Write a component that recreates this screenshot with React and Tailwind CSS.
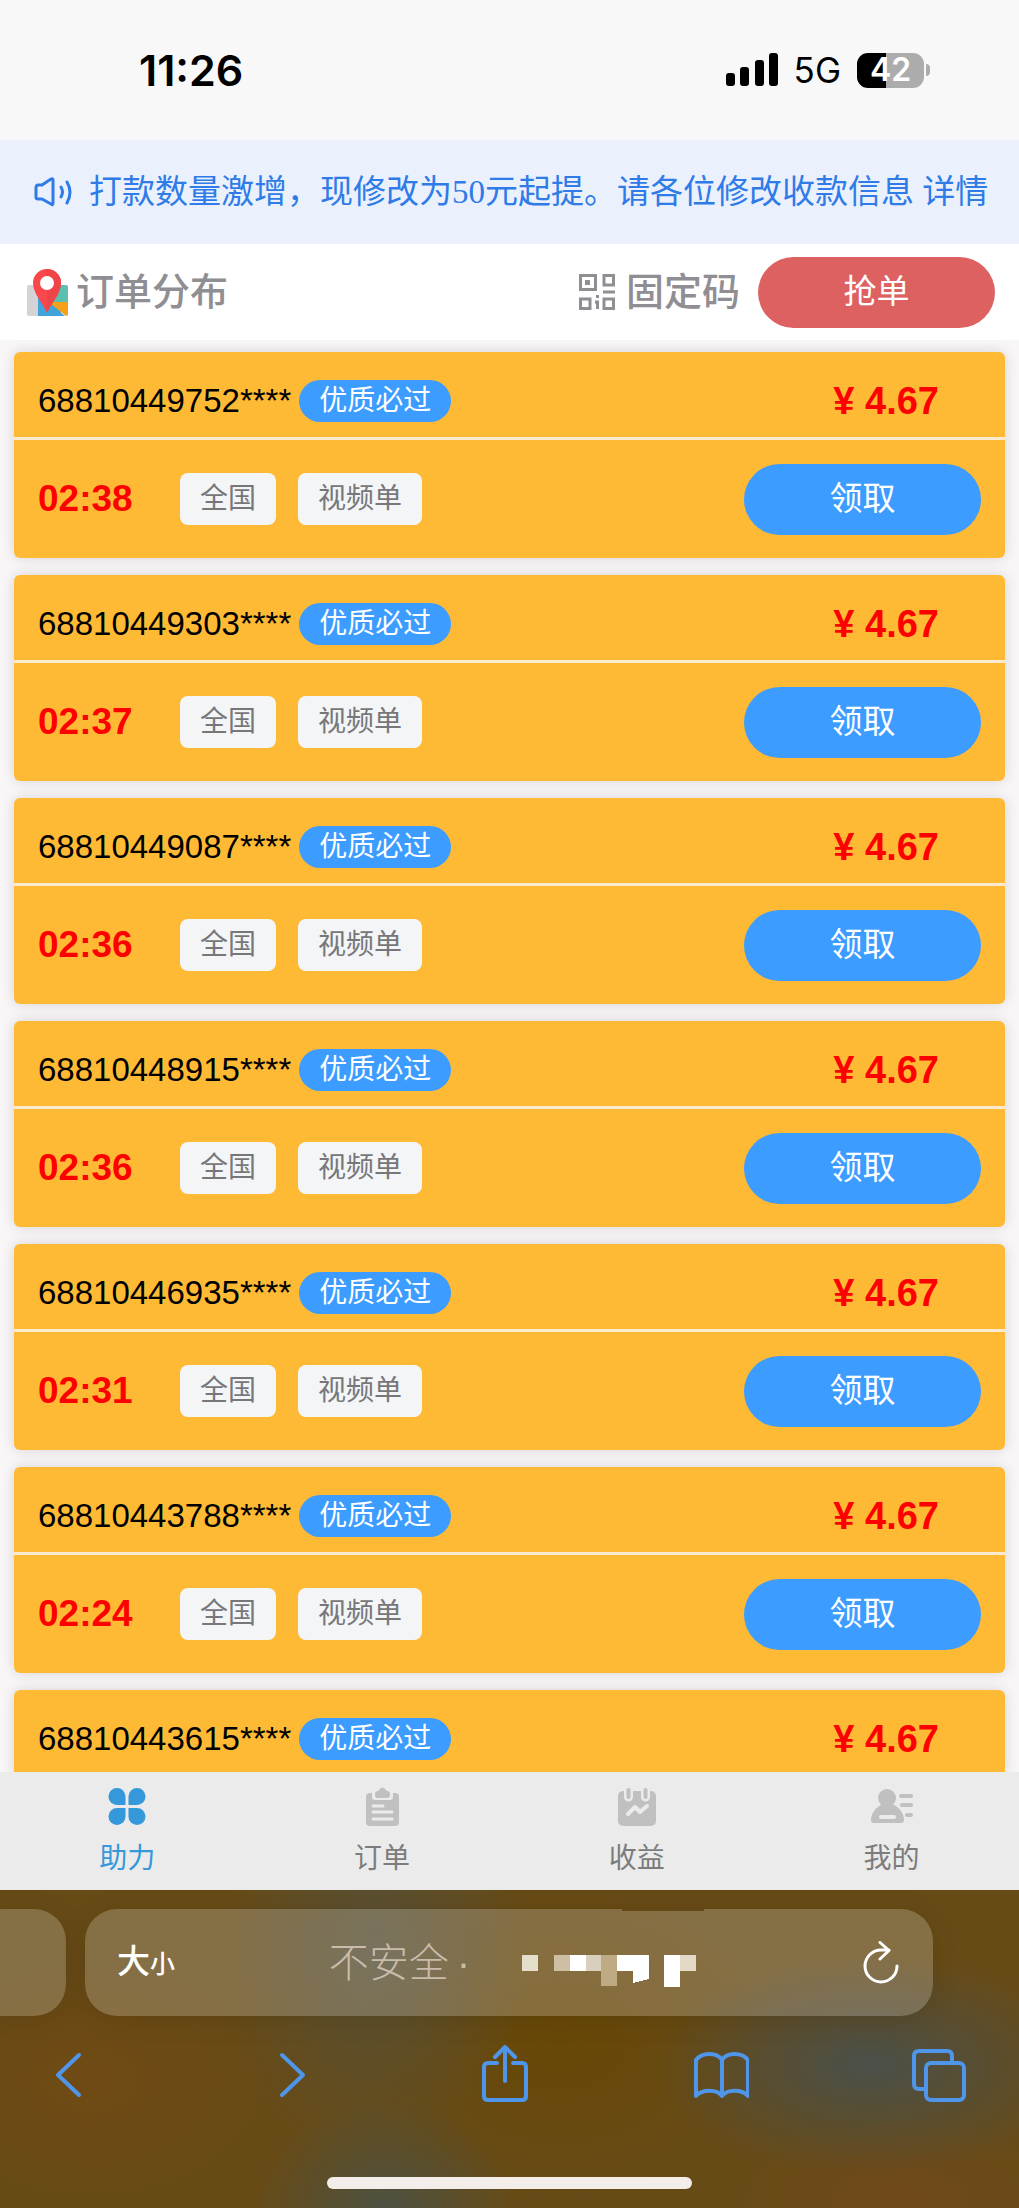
import React, { useState } from 'react';

const orders = [
  { no: '68810449752****', time: '02:38', price: '4.67' },
  { no: '68810449303****', time: '02:37', price: '4.67' },
  { no: '68810449087****', time: '02:36', price: '4.67' },
  { no: '68810448915****', time: '02:36', price: '4.67' },
  { no: '68810446935****', time: '02:31', price: '4.67' },
  { no: '68810443788****', time: '02:24', price: '4.67' },
  { no: '68810443615****', price: '4.67' },
];

const StatusBar = () => (
  <div className="shrink-0 h-[140px] bg-[#f8f8f8] pl-[139px] pr-[89px] flex items-center justify-between text-black font-['Inter',sans-serif]">
    <span className="text-[43px] leading-[44px] font-semibold">11:26</span>
    <div className="flex items-center">
      <svg width="52" height="34" viewBox="0 0 52 34" aria-hidden="true">
        <rect x="0" y="20" width="9" height="13" rx="3" />
        <rect x="14" y="14" width="9" height="19" rx="3" />
        <rect x="29" y="7" width="9" height="26" rx="3" />
        <rect x="43" y="0" width="9" height="33" rx="3" />
      </svg>
      <span className="ml-4 text-[35px] leading-[36px]">5G</span>
      <div className="ml-4 w-[67px] h-[35px] rounded-[11px] bg-linear-to-r from-black from-43% to-[#acacac] to-43% flex items-center justify-center text-white text-[32px] leading-[34px] font-semibold">
        42
      </div>
      <div className="ml-[2px] w-1 h-3 rounded-r-full bg-[#acacac]"></div>
    </div>
  </div>
);

const NoticeBar = () => (
  <div className="shrink-0 h-[104px] bg-[#eaf1fd] pl-[34px] flex items-center text-[#2f7be8]">
    <svg width="38" height="32" viewBox="0 0 38 32" fill="none" stroke="currentColor" strokeWidth="3" strokeLinecap="round" strokeLinejoin="round" aria-hidden="true">
      <path d="M8 9L17 3Q19 2 19 4V27Q19 30 17 28L8 23H4Q2 23 2 21V12Q2 9 4 9Z" />
      <path d="M27 11Q30 16 27 21" />
      <path d="M33 6Q39 16 33 27" />
    </svg>
    <p className="ml-[17px] text-[33px] leading-[48px] whitespace-nowrap font-['Liberation_Serif','Noto_Sans_CJK_SC',sans-serif]">
      打款数量激增，现修改为50元起提。请各位修改收款信息 <a href="#detail">详情</a>
    </p>
  </div>
);

const MapIcon = () => (
  <svg width="41" height="47" viewBox="0 0 41 47" aria-hidden="true">
    <path d="M2 16H12V47H2Q0 47 0 45V18Q0 16 2 16Z" fill="#d3d3d8" />
    <path d="M11 18H34V47H11Z" fill="#41a3d9" />
    <path d="M29 16H39Q41 16 41 18V34H25Z" fill="#5cbfb2" />
    <path d="M26 33H41V45Q41 47 39 47L24 35Z" fill="#f6a01b" />
    <path d="M23 35L38 47H22Z" fill="#41a3d9" />
    <path d="M20 0A14 14 0 0 1 34 14C34 24 25 33 21 42Q20 44 19 42C15 33 6 24 6 14A14 14 0 0 1 20 0Z" fill="#f9474c" />
    <path d="M20 0A14 14 0 0 1 34 14C34 24 25 33 21 42Q20 43 20 43Z" fill="#f04548" />
    <circle cx="20" cy="14" r="7" fill="#fff" />
  </svg>
);

const QrIcon = () => (
  <svg width="36" height="36" viewBox="0 0 36 36" fill="none" stroke="currentColor" strokeWidth="3" aria-hidden="true">
    <rect x="1.5" y="1.5" width="15" height="14" />
    <rect x="6" y="6" width="5" height="5" fill="currentColor" stroke="none" />
    <rect x="25" y="1.5" width="9.5" height="9.5" />
    <rect x="1.5" y="25" width="9.5" height="9.5" />
    <rect x="25" y="25" width="9.5" height="9.5" />
    <path d="M24 18H36M18.5 21V24M16 28H18.5V35" />
  </svg>
);

const Header = () => (
  <header className="shrink-0 h-24 bg-white pl-[27px] pr-6 flex items-center font-['Liberation_Sans','Noto_Sans_CJK_SC',sans-serif]">
    <MapIcon />
    <h1 className="ml-2 text-[38px] leading-[48px] font-medium text-[#8f8e92]">订单分布</h1>
    <button className="ml-auto flex items-center gap-[11px] text-[38px] leading-[48px] font-medium text-[#8f8e92]">
      <QrIcon />
      固定码
    </button>
    <button className="ml-[18px] w-[237px] h-[71px] rounded-full bg-[#dd6161] text-white text-[33px] leading-[44px]">
      抢单
    </button>
  </header>
);

const OrderCard = ({ order }) => (
  <li className="rounded-md bg-[#ffba35] shadow-[0_0_14px_rgba(0,0,0,0.14)]">
    <div className="pt-7 pb-[15px] pl-6 pr-[66px] flex items-center border-b-[3px] border-[#fcebce]">
      <span className="text-[33px] leading-[42px] text-black">{order.no}</span>
      <span className="ml-2 h-[42px] px-5 rounded-full bg-[#3c9cff] text-white text-[28px] leading-[42px]">优质必过</span>
      <strong className="ml-auto text-[38px] leading-[42px] font-bold text-[#fe0000]">¥ {order.price}</strong>
    </div>
    {order.time && (
      <div className="h-[118px] px-6 flex items-center">
        <time className="w-[142px] text-[37px] leading-[48px] font-bold text-[#fe0000]">{order.time}</time>
        <span className="h-[52px] px-5 rounded-lg bg-[#f3f5f6] text-[#77777a] text-[28px] leading-[52px]">全国</span>
        <span className="ml-[22px] h-[52px] px-5 rounded-lg bg-[#f3f5f6] text-[#77777a] text-[28px] leading-[52px]">视频单</span>
        <button className="ml-auto w-[237px] h-[71px] rounded-full bg-[#3c9cff] text-white text-[33px] leading-[44px]">
          领取
        </button>
      </div>
    )}
  </li>
);

const CloverIcon = () => (
  <svg width="42" height="40" viewBox="0 0 42 40" fill="currentColor" aria-hidden="true">
    <path d="M19.5 9.5V18H11A8.5 8.5 0 1 1 19.5 9.5Z" />
    <path d="M22.5 9.5V18H31A8.5 8.5 0 1 0 22.5 9.5Z" />
    <path d="M19.5 29.5V21H11A8.5 8.5 0 1 0 19.5 29.5Z" />
    <path d="M22.5 29.5V21H31A8.5 8.5 0 1 1 22.5 29.5Z" />
  </svg>
);

const ClipboardIcon = () => (
  <svg width="42" height="40" viewBox="0 0 42 40" aria-hidden="true">
    <rect x="5" y="6" width="33" height="33" rx="4" fill="#c0c0c0" />
    <path d="M11 4H32V10Q32 13 29 13H14Q11 13 11 10Z" fill="#ebebeb" />
    <path d="M14 7Q14 4 17 4L20 1Q21 0 23 1L26 4Q29 4 29 7V8Q29 11 26 11H17Q14 11 14 8Z" fill="#c0c0c0" />
    <path d="M12 19H22M12 25H31M12 32H31" stroke="#ebebeb" strokeWidth="3" strokeLinecap="round" />
  </svg>
);

const CalendarIcon = () => (
  <svg width="42" height="40" viewBox="0 0 42 40" aria-hidden="true">
    <rect x="2" y="4" width="38" height="35" rx="5" fill="#c0c0c0" />
    <path d="M12.500 3V10M29.500 3V10" stroke="#ebebeb" strokeWidth="9" strokeLinecap="round" />
    <path d="M12.500 3V10M29.500 3V10" stroke="#c0c0c0" strokeWidth="4" strokeLinecap="round" />
    <path d="M12 27L19 20L24 25L31 19" fill="none" stroke="#ebebeb" strokeWidth="4" strokeLinecap="round" strokeLinejoin="round" />
  </svg>
);

const UserIcon = () => (
  <svg width="42" height="40" viewBox="0 0 42 40" aria-hidden="true">
    <circle cx="16" cy="11" r="9" fill="#c0c0c0" />
    <path d="M12 17H21C28 20 33 26 33 33Q33 36 30 36H3Q0 36 0 33C0 26 5 20 12 17Z" fill="#c0c0c0" />
    <path d="M10 30H23" stroke="#ebebeb" strokeWidth="4" strokeLinecap="round" />
    <path d="M30 9H40M31 18H40M36 28H40" stroke="#c0c0c0" strokeWidth="4" strokeLinecap="round" />
  </svg>
);

const tabs = [
  { id: 'help', label: '助力', Icon: CloverIcon },
  { id: 'order', label: '订单', Icon: ClipboardIcon },
  { id: 'income', label: '收益', Icon: CalendarIcon },
  { id: 'mine', label: '我的', Icon: UserIcon },
];

const TabBar = () => {
  const [active, setActive] = useState('help');

  return (
    <nav className="shrink-0 grid grid-cols-4 bg-[#ebebeb]">
      {tabs.map(({ id, label, Icon }) => (
        <button
          key={id}
          onClick={() => setActive(id)}
          className={`h-[118px] flex flex-col items-center justify-center gap-4 text-[28px] leading-[32px] ${active === id ? 'text-[#3498db]' : 'text-[#7c7c7c]'}`}
        >
          <Icon />
          {label}
        </button>
      ))}
    </nav>
  );
};

// Blurred-out host name
const MaskedHost = () => (
  <svg width="174" height="32" viewBox="0 0 174 32" shapeRendering="crispEdges" aria-hidden="true">
    <rect x="0" y="0" width="16" height="16" fill="#e4dfcb" />
    <rect x="32" y="0" width="16" height="16" fill="#d0bea4" />
    <rect x="48" y="0" width="16" height="16" fill="#fff" />
    <rect x="64" y="0" width="15" height="16" fill="#d9cfbf" />
    <rect x="79" y="0" width="16" height="31" fill="#beab84" />
    <path d="M95 0H127V24L111 28V16H95Z" fill="#fff" />
    <rect x="142" y="0" width="16" height="32" fill="#fff" />
    <rect x="158" y="0" width="16" height="16" fill="#e4d9c4" />
  </svg>
);

const ToolButton = ({ label, children }) => (
  <button aria-label={label}>
    <svg width="56" height="60" viewBox="0 0 56 60" fill="none" stroke="currentColor" strokeWidth="4" strokeLinecap="round" strokeLinejoin="round">
      {children}
    </svg>
  </button>
);

const BrowserBar = () => (
  <footer className="shrink-0 pt-[19px] pb-[19px] bg-[#674b17] bg-[radial-gradient(ellipse_220px_110px_at_870px_175px,#4a504a,transparent),radial-gradient(ellipse_130px_110px_at_385px_320px,#4c5142,transparent),radial-gradient(ellipse_150px_220px_at_375px_60px,#575036,transparent),radial-gradient(ellipse_180px_120px_at_90px_190px,#704a14,transparent),radial-gradient(ellipse_160px_80px_at_900px_310px,#71491a,transparent),radial-gradient(ellipse_220px_160px_at_560px_150px,#684807,transparent)]">
    <div className="flex gap-[19px]">
      <div className="w-[66px] h-[107px] rounded-r-[32px] bg-white/20 shadow-[0_4px_24px_rgba(60,40,0,0.2)]"></div>
      <div className="relative flex-1 mr-[86px] h-[107px] pl-8 pr-[34px] rounded-[32px] bg-white/20 shadow-[0_4px_24px_rgba(60,40,0,0.2)] flex items-center">
        <span className="absolute top-0 right-[229px] w-[82px] h-[2px] bg-[#644816]"></span>
        <button aria-label="大小" className="flex items-baseline text-white font-medium leading-[40px]">
          <span className="text-[33px]">大</span>
          <span className="text-[25px]">小</span>
        </button>
        <button className="mx-auto flex items-center pr-[13px] text-[40px] leading-[52px] text-[#c9bcab] font-light">
          不安全
          <span className="ml-2 mr-[52px]">·</span>
          <span className="pt-4">
            <MaskedHost />
          </span>
        </button>
        <button aria-label="刷新" className="text-white">
          <svg width="36" height="44" viewBox="0 0 36 44" fill="none" stroke="currentColor" strokeWidth="3" strokeLinecap="round" strokeLinejoin="round">
            <path d="M34 25A16 16 0 1 1 18 9H26M17 1.500L26 9.500L17 18" />
          </svg>
        </button>
      </div>
    </div>
    <div className="mt-[29px] pl-10 pr-[53px] flex justify-between text-[#4f95ea]">
      <ToolButton label="后退">
        <path d="M39 10L18 30L39 50" />
      </ToolButton>
      <ToolButton label="前进">
        <path d="M24 10L45 30L24 50" />
      </ToolButton>
      <ToolButton label="分享">
        <path d="M22 18H13Q9 18 9 22V51Q9 55 13 55H47Q51 55 51 51V22Q51 18 47 18H38" />
        <path d="M30 36V3M20 12L30 2L40 12" />
      </ToolButton>
      <ToolButton label="书签">
        <path d="M29 15C24 7 9 7 3 15V51C9 44 24 44 29 51C34 44 49 44 55 51V15C49 7 34 7 29 15ZM29 15V51" />
      </ToolButton>
      <ToolButton label="标签页">
        <path d="M14 44H9Q4 44 4 39V11Q4 6 9 6H37Q42 6 42 11V16" />
        <rect x="16" y="18" width="38" height="37" rx="5" />
      </ToolButton>
    </div>
    <div className="mt-[72px] mx-auto w-[365px] h-3 rounded-full bg-[#f3eeea]"></div>
  </footer>
);

const App = () => {
  return (
    <div className="h-screen flex flex-col overflow-hidden font-['Liberation_Sans','Noto_Sans_CJK_SC',sans-serif]">
      <StatusBar />
      <NoticeBar />
      <Header />
      <main className="flex-1 min-h-0 overflow-hidden bg-[#f8f6f7] pt-3 px-[14px]">
        <ul className="space-y-[17px]">
          {orders.map((order) => (
            <OrderCard key={order.no} order={order} />
          ))}
        </ul>
      </main>
      <TabBar />
      <BrowserBar />
    </div>
  );
};

export default App;
